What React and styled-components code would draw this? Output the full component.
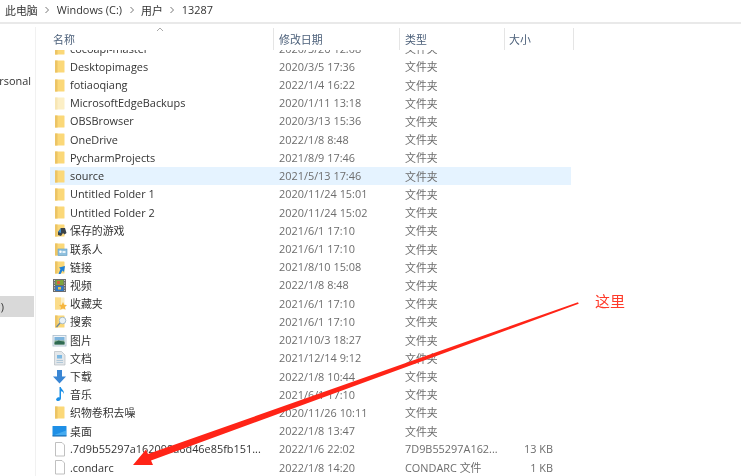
import React from 'react';
import styled, { createGlobalStyle } from 'styled-components';

const Global = createGlobalStyle`
  html, body { margin: 0; padding: 0; background: #fff; }
  body { font-family: "Open Sans", "Noto Sans CJK SC", sans-serif; }
`;

const Window = styled.div`
  position: relative;
  width: 741px;
  height: 476px;
  overflow: hidden;
  display: flex;
  flex-direction: column;
  background: #fff;
  font-size: 10.9px;
  filter: blur(0.45px);
`;

const Breadcrumb = styled.nav`
  flex: none;
  display: flex;
  align-items: center;
  padding: 0 0 3px 5px;
  box-sizing: border-box;
  height: 24px;
  border-bottom: 2px solid #e9e9e9;
  color: #333;
`;

const Crumb = styled.span`
  white-space: nowrap;
`;

const Chevron = styled.svg`
  width: 6px;
  height: 8px;
  margin: 0 6.5px;
  flex: none;
`;

const Main = styled.div`
  flex: 1;
  min-height: 0;
  display: flex;
`;

const Sidebar = styled.aside`
  width: 35px;
  flex: none;
  border-right: 1px solid #f1f1f1;
  margin-top: 3px;
  padding-top: 44px;
  display: flex;
  flex-direction: column;
`;

const SideItem = styled.div`
  width: 34px;
  height: ${p => p.$h}px;
  margin-bottom: ${p => p.$after || 0}px;
  display: flex;
  align-items: center;
  justify-content: flex-end;
  overflow: hidden;
  white-space: nowrap;
  color: #333;
  padding-right: ${p => p.$pad}px;
  box-sizing: border-box;
  background: ${p => (p.$selected ? '#d9d9d9' : 'transparent')};
`;

const Content = styled.div`
  flex: 1;
  min-width: 0;
  padding-left: 14px;
  display: flex;
  flex-direction: column;
`;

const Header = styled.div`
  position: relative;
  flex: none;
  margin-top: 4px;
  height: 22px;
  width: 524px;
  display: grid;
  grid-template-columns: 223px 126px 105px 70px;
  color: #4c607a;
`;

const HeadCell = styled.div`
  display: flex;
  align-items: center;
  padding: 0 0 1px ${p => p.$pad}px;
  border-left: ${p => (p.$line ? '1px solid #e5e5e5' : 'none')};
  border-right: ${p => (p.$end ? '1px solid #e5e5e5' : 'none')};
  box-sizing: border-box;
`;

const SortMark = styled.svg`
  position: absolute;
  left: 106px;
  top: -1px;
  width: 8px;
  height: 5px;
`;

const List = styled.div`
  flex: 1;
  min-height: 0;
  overflow: hidden;
`;

const Rows = styled.div`
  margin-top: -11px;
  width: 521px;
`;

const Row = styled.div`
  height: 18.227px;
  display: grid;
  grid-template-columns: 223px 126px 105px 49px 18px;
  align-items: center;
  background: ${p => (p.$selected ? '#e5f3ff' : 'transparent')};
`;

const NameCell = styled.div`
  display: flex;
  align-items: center;
  gap: 2px;
  padding-left: 2px;
  color: #333;
  white-space: nowrap;
  overflow: hidden;
`;

const MetaCell = styled.div`
  padding-left: 6px;
  color: #6d6d6d;
  white-space: nowrap;
`;

const SizeCell = styled.div`
  color: #6d6d6d;
  text-align: right;
  white-space: nowrap;
`;

const IconBox = styled.svg`
  width: 16px;
  height: 16px;
  flex: none;
`;

const Annotation = styled.svg`
  position: absolute;
  left: 0;
  top: 0;
  width: 741px;
  height: 476px;
  pointer-events: none;
`;

const Label = styled.div`
  position: absolute;
  left: 595px;
  top: 291px;
  font-size: 15px;
  line-height: 20px;
  color: #ff3a2a;
`;

const FolderBase = ({ light }) => (
  <>
    <rect x="3" y="2.5" width="9.5" height="12" rx="0.5" fill={light ? '#fcefc6' : '#fbd878'} />
    <rect x="3" y="2.5" width="2.5" height="12" fill={light ? '#f7e6b4' : '#ecc465'} />
  </>
);

const Icon = ({ kind }) => (
  <IconBox viewBox="0 0 16 16">
    {kind === 'folder' && <FolderBase />}
    {kind === 'light' && <FolderBase light />}
    {kind === 'games' && (
      <>
        <FolderBase />
        <path d="M6 10l3-4h4l1.5 5-2 1.500-1.500-1.500-2 3-3-1z" fill="#3a4248" />
        <path d="M6 10l3-4v5z" fill="#3f8fd0" />
      </>
    )}
    {kind === 'contacts' && (
      <>
        <FolderBase />
        <rect x="6" y="8" width="9" height="6.500" fill="#8fc0de" stroke="#5b9cc8" strokeWidth="0.6" />
        <circle cx="8.500" cy="10.800" r="1.200" fill="#fff" />
        <rect x="10.500" y="10" width="3" height="2" fill="#e8f3fa" />
      </>
    )}
    {kind === 'links' && (
      <>
        <FolderBase />
        <path d="M6.500 15l2-5-1.500-1.500 6-1.500-1 6-1.500-1.500-2 3.500z" fill="#1e7fd6" />
      </>
    )}
    {kind === 'video' && (
      <>
        <rect x="1" y="2" width="13" height="13" fill="#6c6c6c" />
        <rect x="3.500" y="3" width="8" height="5" fill="#7da63d" />
        <rect x="5" y="4" width="3" height="3" fill="#d9603a" />
        <rect x="3.500" y="9" width="8" height="5" fill="#2f79c9" />
        <rect x="6" y="10" width="3" height="2.500" fill="#e7c14f" />
        <path d="M2 3.500h.8M2 6h.8M2 8.500h.8M2 11h.8M2 13.500h.8M12.300 3.500h.8M12.300 6h.8M12.300 8.500h.8M12.300 11h.8M12.300 13.500h.8" stroke="#eee" strokeWidth="1" />
      </>
    )}
    {kind === 'star' && (
      <>
        <FolderBase light />
        <rect x="3" y="2.500" width="6" height="12" fill="#fbdc8a" />
        <path d="M11 7l1.200 2.700 2.800.3-2 2 .6 2.800-2.600-1.400-2.600 1.400.6-2.800-2-2 2.800-.3z" fill="#f6b63f" />
      </>
    )}
    {kind === 'search' && (
      <>
        <FolderBase />
        <circle cx="10.500" cy="7.500" r="3.300" fill="#e9f2f8" stroke="#9fb7c6" strokeWidth="0.9" />
        <path d="M8 10l-3.500 4" stroke="#6f8796" strokeWidth="1.300" />
      </>
    )}
    {kind === 'pictures' && (
      <>
        <rect x="1" y="3.500" width="13" height="10.500" fill="#eef3f8" stroke="#a9bccb" strokeWidth="0.8" />
        <rect x="2.500" y="5" width="10" height="3.500" fill="#7db4dd" />
        <path d="M2.500 8.500h10v4h-10z" fill="#6f9a78" />
        <path d="M2.500 10.500l4-2 6 1.500v2.500h-10z" fill="#2f6a52" />
      </>
    )}
    {kind === 'docs' && (
      <>
        <path d="M2.500 1.500h7l3.500 3.500v10h-10.500z" fill="#e3e7ea" stroke="#b4bcc2" strokeWidth="0.7" />
        <rect x="5" y="5" width="5" height="3.500" fill="#7cb8e2" />
        <path d="M4.500 10.500h6.500M4.500 12.500h6.500" stroke="#a9c3d6" strokeWidth="0.9" />
      </>
    )}
    {kind === 'download' && <path d="M5 2h5v6.500h4l-6.500 7-6.500-7h4z" fill="#3a86d4" />}
    {kind === 'music' && (
      <path d="M7.500 1h1.300c.3 2.400 3.700 3.200 3.200 7-.4-1.500-1.600-2.500-3-2.700v7c0 1.800-1.800 3-3.600 2.600-1.300-.3-1.700-1.500-.9-2.500 1-1.200 2.200-1.300 3-.9z" fill="#1b8fe6" />
    )}
    {kind === 'desktop' && (
      <>
        <rect x="0.500" y="3" width="14" height="10" rx="0.600" fill="#1e8fe6" />
        <path d="M1 12.500l13-5v5z" fill="#45abf0" />
        <rect x="0.500" y="12.500" width="14" height="1" fill="#1263a8" />
      </>
    )}
    {kind === 'file' && <path d="M3.500 1.500h6.500l2.500 2.500v11h-9z" fill="#fff" stroke="#b9b9b9" strokeWidth="0.9" />}
  </IconBox>
);

const F = '文件夹';
const rows = [
  ['folder', 'cocoapi-master', '2020/3/26 12:08', F],
  ['folder', 'Desktopimages', '2020/3/5 17:36', F],
  ['folder', 'fotiaoqiang', '2022/1/4 16:22', F],
  ['light', 'MicrosoftEdgeBackups', '2020/1/11 13:18', F],
  ['folder', 'OBSBrowser', '2020/3/13 15:36', F],
  ['folder', 'OneDrive', '2022/1/8 8:48', F],
  ['folder', 'PycharmProjects', '2021/8/9 17:46', F],
  ['folder', 'source', '2021/5/13 17:46', F, '', true],
  ['folder', 'Untitled Folder 1', '2020/11/24 15:01', F],
  ['folder', 'Untitled Folder 2', '2020/11/24 15:02', F],
  ['games', '保存的游戏', '2021/6/1 17:10', F],
  ['contacts', '联系人', '2021/6/1 17:10', F],
  ['links', '链接', '2021/8/10 15:08', F],
  ['video', '视频', '2022/1/8 8:48', F],
  ['star', '收藏夹', '2021/6/1 17:10', F],
  ['search', '搜索', '2021/6/1 17:10', F],
  ['pictures', '图片', '2021/10/3 18:27', F],
  ['docs', '文档', '2021/12/14 9:12', F],
  ['download', '下载', '2022/1/8 10:44', F],
  ['music', '音乐', '2021/6/1 17:10', F],
  ['folder', '织物卷积去噪', '2020/11/26 10:11', F],
  ['desktop', '桌面', '2022/1/8 13:47', F],
  ['file', '.7d9b55297a162098a6d46e85fb151...', '2022/1/6 22:02', '7D9B55297A162...', '13 KB'],
  ['file', '.condarc', '2022/1/8 14:20', 'CONDARC 文件', '1 KB'],
];

const crumbs = ['此电脑', 'Windows (C:)', '用户', '13287'];

export default function App() {
  return (
    <Window>
      <Global />
      <Breadcrumb>
        {crumbs.map((c, i) => (
          <React.Fragment key={c}>
            {i > 0 && (
              <Chevron viewBox="0 0 6 8">
                <path d="M1.500 1l3 3-3 3" fill="none" stroke="#777" strokeWidth="1" />
              </Chevron>
            )}
            <Crumb>{c}</Crumb>
          </React.Fragment>
        ))}
      </Breadcrumb>
      <Main>
        <Sidebar>
          <SideItem $h={18} $pad={3} $after={207}>OneDrive - Personal</SideItem>
          <SideItem $h={21} $pad={30} $selected>Windows (C:)</SideItem>
        </Sidebar>
        <Content>
          <Header>
            <SortMark viewBox="0 0 8 5">
              <path d="M1 4l3-3 3 3" fill="none" stroke="#a8a8a8" strokeWidth="1" />
            </SortMark>
            <HeadCell $pad={3}>名称</HeadCell>
            <HeadCell $pad={5} $line>修改日期</HeadCell>
            <HeadCell $pad={5} $line>类型</HeadCell>
            <HeadCell $pad={4} $line $end>大小</HeadCell>
          </Header>
          <List>
            <Rows>
              {rows.map(([kind, name, date, type, size, selected]) => (
                <Row key={name} $selected={selected}>
                  <NameCell>
                    <Icon kind={kind} />
                    {name}
                  </NameCell>
                  <MetaCell>{date}</MetaCell>
                  <MetaCell>{type}</MetaCell>
                  <SizeCell>{size}</SizeCell>
                </Row>
              ))}
            </Rows>
          </List>
        </Content>
      </Main>
      <Annotation viewBox="0 0 741 476">
        <path d="M578 302.200L578.700 303.800L151 460.500L153 465L133 465L146 449.500L148 454Z" fill="#ff2417" />
      </Annotation>
      <Label>这里</Label>
    </Window>
  );
}
